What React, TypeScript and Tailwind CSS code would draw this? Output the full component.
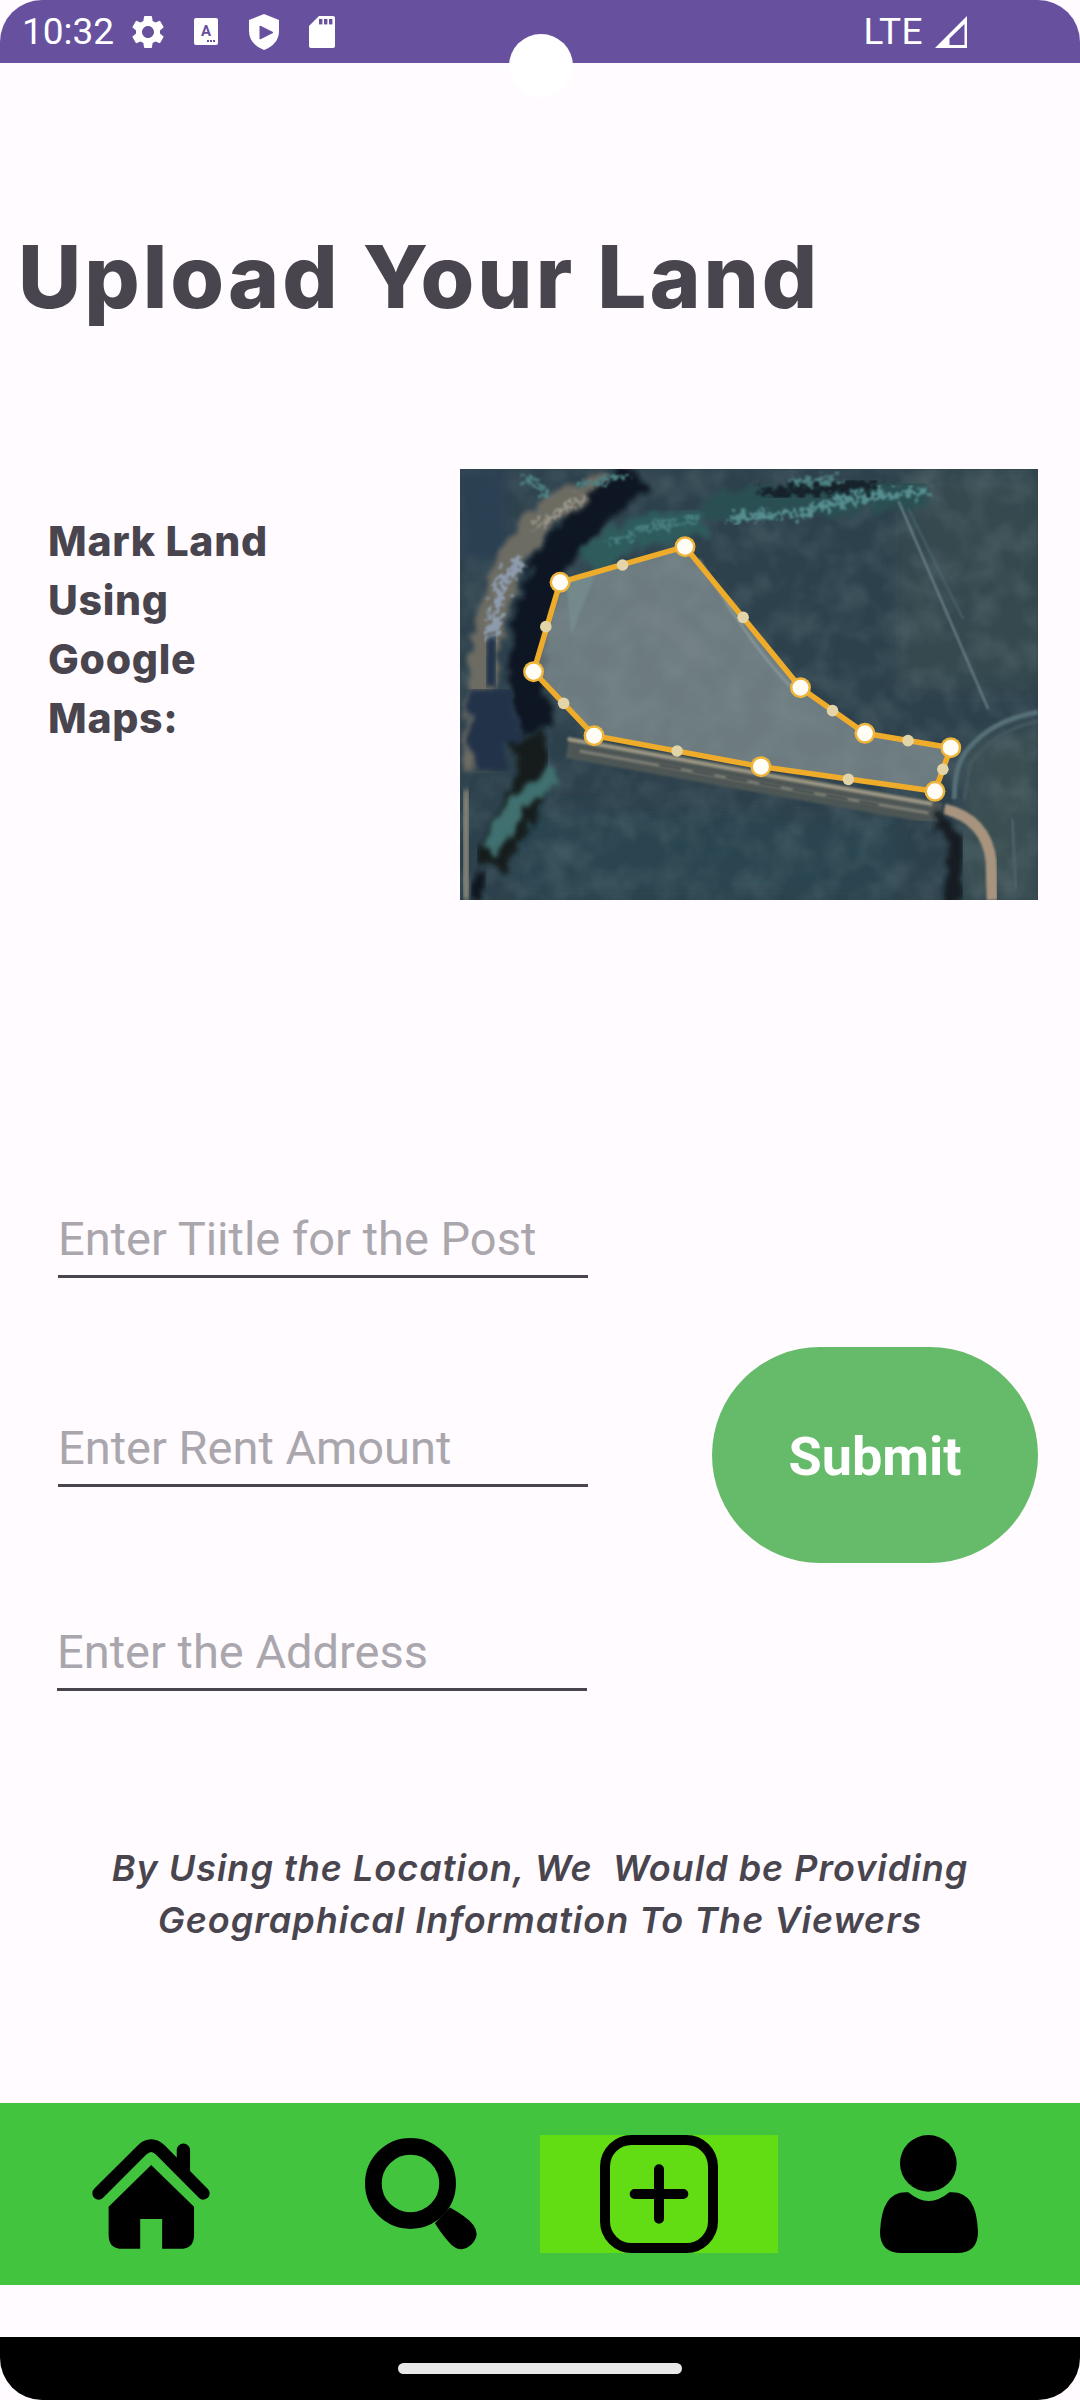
import React from "react";

const toX = (z: number) => (z - 51) / 2.52;
const toY = (z: number) => (z - 57) / 3;

const bigPts: [number, number][] = [
  [620, 290], [304, 397], [237, 665], [390, 857], [812, 950], [1252, 1024], [1292, 893], [1075, 850], [912, 713],
];
const smallPts: [number, number][] = [
  [462, 345], [268, 530], [313, 760], [600, 903], [1033, 988], [1272, 958], [1184, 872], [993, 782], [767, 502],
];
const polyPoints = bigPts.map(([x, y]) => `${toX(x)},${toY(y)}`).join(" ");

function SatelliteMap() {
  return (
    <svg width="578" height="431" viewBox="0 0 580 431" preserveAspectRatio="none" className="block shrink-0">
      <defs>
        <filter id="soft" x="-10%" y="-10%" width="120%" height="120%"><feGaussianBlur stdDeviation="1.3" /></filter>
        <filter id="softer" x="-20%" y="-20%" width="140%" height="140%"><feGaussianBlur stdDeviation="8" /></filter>
        <filter id="rough" x="-20%" y="-20%" width="140%" height="140%">
          <feTurbulence type="fractalNoise" baseFrequency="0.07" numOctaves="4" seed="4" result="n" />
          <feDisplacementMap in="SourceGraphic" in2="n" scale="18" xChannelSelector="R" yChannelSelector="G" />
          <feGaussianBlur stdDeviation="2.4" />
        </filter>
        <filter id="fleck" x="-20%" y="-20%" width="140%" height="140%">
          <feTurbulence type="fractalNoise" baseFrequency="0.16" numOctaves="3" seed="11" result="n" />
          <feDisplacementMap in="SourceGraphic" in2="n" scale="26" xChannelSelector="R" yChannelSelector="G" />
          <feGaussianBlur stdDeviation="1.1" />
        </filter>
        <filter id="mottle" x="0" y="0" width="100%" height="100%">
          <feTurbulence type="fractalNoise" baseFrequency="0.035" numOctaves="4" seed="7" />
          <feColorMatrix values="0 0 0 0 0.62  0 0 0 0 0.74  0 0 0 0 0.76  1.6 0 0 0 -0.62" />
          <feGaussianBlur stdDeviation="1.6" />
        </filter>
        <clipPath id="mapclip"><rect width="580" height="431" /></clipPath>
      </defs>
      <g clipPath="url(#mapclip)">
        <rect width="580" height="431" fill="#2d414c" />
        <rect x="440" y="0" width="140" height="220" fill="#344850" filter="url(#softer)" />
        <path d="M60 340 L440 350 L440 431 L50 431 Z" fill="#2c444f" filter="url(#softer)" />
        <path d="M510 270 L580 260 L580 431 L505 431 Z" fill="#3b4f52" filter="url(#softer)" />
        <rect width="580" height="431" filter="url(#mottle)" opacity="0.16" />
        {/* left bank */}
        <rect x="0" y="0" width="46" height="90" fill="#2a4152" filter="url(#softer)" />
        <path d="M16 300 L26 170 L50 90 L90 40 L150 18" fill="none" stroke="#6d6c64" strokeWidth="28" filter="url(#rough)" />
        <path d="M4 431 L8 320" fill="none" stroke="#8f897c" strokeWidth="14" filter="url(#rough)" />
        <path d="M30 170 L44 110 L62 92" fill="none" stroke="#8d9bad" strokeWidth="10" filter="url(#fleck)" />
        <path d="M74 60 L110 36 L160 18" fill="none" stroke="#9d9a8e" strokeWidth="5" filter="url(#fleck)" />
        {/* dark tree belt */}
        <path d="M175 5 L130 50 L92 90 L72 150 L66 210 L76 260" fill="none" stroke="#0f1820" strokeWidth="34" filter="url(#rough)" />
        <path d="M66 265 L78 300 L60 340 L28 395" fill="none" stroke="#121d1e" strokeWidth="34" filter="url(#rough)" />
        <path d="M8 232 H52 M10 262 H58 M14 290 H46" fill="none" stroke="#20304a" strokeWidth="30" filter="url(#rough)" />
        <path d="M34 170 L28 220" fill="none" stroke="#20304a" strokeWidth="16" filter="url(#rough)" />
        {/* teal vegetation */}
        <path d="M128 92 L175 64 L245 50" fill="none" stroke="#2f5b5d" strokeWidth="30" filter="url(#rough)" />
        <path d="M245 46 L300 34 L380 28 L470 20" fill="none" stroke="#2b4f53" strokeWidth="34" filter="url(#rough)" />
        <path d="M150 74 L190 58 L240 50" fill="none" stroke="#4a8082" strokeWidth="5" filter="url(#fleck)" />
        <path d="M270 50 L340 44 L390 30 L470 22" fill="none" stroke="#578f90" strokeWidth="7" filter="url(#fleck)" />
        <path d="M300 26 L420 14" fill="none" stroke="#14222a" strokeWidth="11" filter="url(#fleck)" />
        <path d="M70 0 H280" fill="none" stroke="#1a2932" strokeWidth="26" filter="url(#rough)" />
        <path d="M280 0 H480" fill="none" stroke="#1d2f37" strokeWidth="14" filter="url(#rough)" />
        <path d="M60 6 L90 26 M120 16 L170 6 M330 12 L380 10" fill="none" stroke="#4e8284" strokeWidth="5" filter="url(#fleck)" />
        <path d="M30 380 L58 335 L95 305" fill="none" stroke="#41706f" strokeWidth="20" filter="url(#rough)" />
        <path d="M14 431 L24 400" fill="none" stroke="#0d161c" strokeWidth="16" filter="url(#rough)" />
        {/* road */}
        <path d="M108 278 L330 318 L482 345" fill="none" stroke="#4d5654" strokeWidth="22" filter="url(#soft)" />
        <path d="M108 270 L330 310 L474 335" fill="none" stroke="#9c9784" strokeWidth="4" filter="url(#soft)" />
        <path d="M120 282 L330 320 L470 344" fill="none" stroke="#7e8074" strokeWidth="3" filter="url(#soft)" />
        <path d="M200 296 L420 336" fill="none" stroke="#3f4a4b" strokeWidth="2.5" strokeDasharray="22 12" filter="url(#soft)" />
        <path d="M486 340 Q528 350 533 392 L534 431" fill="none" stroke="#a8947e" strokeWidth="11" filter="url(#soft)" />
        {/* dark shrubs in corner */}
        <path d="M478 350 L500 372 L494 431" fill="none" stroke="#161f22" strokeWidth="16" filter="url(#rough)" />
        {/* ditch right */}
        <path d="M580 243 Q530 252 506 285 Q496 300 496 330" fill="none" stroke="#566f77" strokeWidth="5" filter="url(#soft)" />
        <path d="M580 252 Q535 262 512 295 L506 330" fill="none" stroke="#45595f" strokeWidth="3" filter="url(#soft)" />
        <path d="M554 350 L558 420" fill="none" stroke="#4f6468" strokeWidth="2.5" filter="url(#soft)" />
        {/* thin line on upper field */}
        <path d="M440 32 L530 240" fill="none" stroke="#7b9298" strokeWidth="1.6" filter="url(#soft)" />
        <path d="M450 40 L505 150" fill="none" stroke="#4f6a72" strokeWidth="1.4" filter="url(#soft)" />
        {/* marked land */}
        <polygon points={polyPoints} fill="#94a0a0" fillOpacity="0.62" />
        <path d="M106 110 L138 100 L112 165 Z" fill="#7fa39f" opacity="0.35" filter="url(#soft)" />
        <path d="M175 140 Q230 160 240 195" fill="none" stroke="#8a9392" strokeWidth="12" opacity="0.35" filter="url(#softer)" />
        <path d="M240 90 Q300 190 340 225" fill="none" stroke="#a0b2b0" strokeWidth="2" opacity="0.6" filter="url(#soft)" />
        <polygon points={polyPoints} fill="none" stroke="#efac2b" strokeWidth="5.5" strokeLinejoin="round" />
        {smallPts.map(([x, y], i) => (
          <circle key={i} cx={toX(x)} cy={toY(y)} r="5.8" fill="#e3d5a8" />
        ))}
        {bigPts.map(([x, y], i) => (
          <g key={i}>
            <circle cx={toX(x)} cy={toY(y)} r="10.5" fill="#efb53b" />
            <circle cx={toX(x)} cy={toY(y)} r="8" fill="#fffdf5" />
          </g>
        ))}
      </g>
    </svg>
  );
}

function Gear() {
  return (
    <svg width="40" height="40" viewBox="0 0 24 24" fill="#ffffff" className="shrink-0">
      <path d="M19.14 12.94c.04-.3.06-.61.06-.94 0-.32-.02-.64-.07-.94l2.03-1.58a.49.49 0 0 0 .12-.61l-1.92-3.32a.488.488 0 0 0-.59-.22l-2.39.96c-.5-.38-1.03-.7-1.62-.94l-.36-2.54a.484.484 0 0 0-.48-.41h-3.84c-.24 0-.43.17-.47.41l-.36 2.54c-.59.24-1.13.57-1.62.94l-2.39-.96c-.22-.08-.47 0-.59.22L2.74 8.87c-.12.21-.08.47.12.61l2.03 1.58c-.05.3-.09.63-.09.94s.02.64.07.94l-2.03 1.58a.49.49 0 0 0-.12.61l1.92 3.32c.12.22.37.29.59.22l2.39-.96c.5.38 1.03.7 1.62.94l.36 2.54c.05.24.24.41.48.41h3.84c.24 0 .44-.17.47-.41l.36-2.54c.59-.24 1.13-.56 1.62-.94l2.39.96c.22.08.47 0 .59-.22l1.92-3.32c.12-.22.07-.47-.12-.61l-2.01-1.58zM12 15.6c-1.98 0-3.6-1.62-3.6-3.6s1.62-3.6 3.6-3.6 3.6 1.62 3.6 3.6-1.62 3.6-3.6 3.6z" />
    </svg>
  );
}

function StatusBar() {
  return (
    <div className="relative flex h-[63px] shrink-0 items-center rounded-t-[42px] bg-[#67519f] pl-[22px] pr-[113px] text-white font-['Roboto',sans-serif] text-[37px] leading-none">
      <span className="w-[91px]">10:32</span>
      <span className="ml-[15px] flex items-center">
        <Gear />
      </span>
      <svg width="24" height="27" viewBox="0 0 24 27" className="ml-[26px] shrink-0">
        <rect width="24" height="27" rx="2" fill="#ffffff" />
        <text x="12" y="18" textAnchor="middle" fontFamily="Roboto, sans-serif" fontWeight="700" fontSize="15" fill="#67519f">A</text>
        <rect x="13" y="22" width="2" height="2" fill="#67519f" />
        <rect x="16" y="22" width="2" height="2" fill="#67519f" />
        <rect x="19" y="22" width="2" height="2" fill="#67519f" />
      </svg>
      <svg width="30" height="36" viewBox="0 0 30 36" className="ml-[31px] shrink-0">
        <path d="M15 0 L30 6 V17 Q30 30 15 36 Q0 30 0 17 V6 Z" fill="#ffffff" />
        <path d="M11 12 L24 18.5 L11 25 Z" fill="#67519f" stroke="#67519f" strokeWidth="1" strokeLinejoin="round" />
      </svg>
      <svg width="26" height="32" viewBox="0 0 26 32" className="ml-[30px] shrink-0">
        <path d="M10 0 H24 Q26 0 26 2 V30 Q26 32 24 32 H2 Q0 32 0 30 V10 Z" fill="#ffffff" />
        <rect x="10" y="3" width="3.4" height="5.4" fill="#67519f" />
        <rect x="15" y="3" width="3.4" height="5.4" fill="#67519f" />
        <rect x="20" y="3" width="3.4" height="5.4" fill="#67519f" />
      </svg>
      <span className="ml-auto tracking-[0.5px]">LTE</span>
      <svg width="32" height="32" viewBox="0 0 32 32" className="ml-[12px] shrink-0">
        <path fillRule="evenodd" d="M0 32 L32 0 V32 Z M14.5 29 H29.5 V8 L14.5 22.5 Z" fill="#ffffff" />
      </svg>
      <div className="absolute left-[509px] top-[34px] h-[64px] w-[64px] rounded-full bg-white" />
    </div>
  );
}

function Field({ placeholder, shift }: { placeholder: string; shift?: boolean }) {
  return (
    <input
      readOnly
      placeholder={placeholder}
      className={`block h-[64px] w-[530px] border-b-[3px] border-[#49454f] bg-transparent pb-[10px] text-[47px] font-['Roboto',sans-serif] outline-none placeholder:text-[#a9a7ad] ${shift ? "-ml-px" : ""}`}
    />
  );
}

export default function App() {
  return (
    <div className="flex h-[2400px] w-[1080px] flex-col overflow-hidden bg-[#fffbfe] text-[#49454f]">
      <StatusBar />
      <div className="h-[406px] shrink-0 pl-[18px] pt-[164px]">
        <h1 className="whitespace-nowrap font-['Inter',sans-serif] text-[87px] font-extrabold leading-[100px] tracking-[3px]">
          Upload Your Land
        </h1>
      </div>
      <div className="flex h-[431px] shrink-0 justify-between pl-[48px] pr-[42px]">
        <p className="mt-[43px] w-[240px] font-['Inter',sans-serif] text-[41px] font-extrabold leading-[59px] tracking-[0.7px]">
          Mark Land Using Google Maps:
        </p>
        <SatelliteMap />
      </div>
      <div className="flex shrink-0 items-start justify-between pl-[58px] pr-[42px] pt-[314px]">
        <div className="flex flex-col">
          <Field placeholder="Enter Tiitle for the Post" />
          <div className="mt-[145px]">
            <Field placeholder="Enter Rent Amount" />
          </div>
          <div className="mt-[140px]">
            <Field placeholder="Enter the Address" shift />
          </div>
        </div>
        <button className="mt-[133px] flex h-[216px] w-[326px] items-center justify-center rounded-full bg-[#66bb6a] pt-[2px] font-['Roboto',sans-serif] text-[54px] font-bold text-white">
          Submit
        </button>
      </div>
      <p className="mt-[151px] shrink-0 whitespace-pre text-center font-['Inter',sans-serif] text-[36px] font-semibold italic leading-[52px] tracking-[1px]">
        {"By Using the Location, We  Would be Providing\nGeographical Information To The Viewers"}
      </p>
      <nav className="mt-[157px] grid h-[182px] shrink-0 grid-cols-[302px_238px_238px_302px] bg-[#43c43f]">
        <div className="flex items-center justify-center">
          <svg width="118" height="110" viewBox="65 42 355 330">
            <path d="M85 205 L215 75 Q243 48 271 75 L400 205" fill="none" stroke="#000" strokeWidth="38" strokeLinecap="round" strokeLinejoin="round" />
            <path d="M340 75 V140" fill="none" stroke="#000" strokeWidth="40" strokeLinecap="round" />
            <path d="M115 245 L243 120 L372 245 V330 Q372 372 330 372 H276 V282 H210 V372 H157 Q115 372 115 330 Z" fill="#000" />
          </svg>
        </div>
        <div className="flex items-center justify-center">
          <svg width="112" height="112" viewBox="886 40 335 335">
            <circle cx="1022" cy="176" r="111" fill="none" stroke="#000" strokeWidth="50" />
            <path d="M1095 295 L1140 248 Q1190 275 1210 300 Q1232 330 1205 358 Q1175 386 1145 360 Q1120 335 1095 295 Z" fill="#000" />
          </svg>
        </div>
        <div className="my-[32px] flex items-center justify-center bg-[#62dd14]">
          <svg width="118" height="118" viewBox="60 30 354 354">
            <rect x="75" y="45" width="324" height="324" rx="80" fill="none" stroke="#000" strokeWidth="30" />
            <path d="M164 207 H310 M237 133 V281" fill="none" stroke="#000" strokeWidth="30" strokeLinecap="round" />
          </svg>
        </div>
        <div className="flex items-center justify-center">
          <svg width="98" height="118" viewBox="900 30 294 354">
            <circle cx="1045" cy="115" r="85" fill="#000" />
            <path d="M985 202 Q1046 254 1108 202 Q1190 195 1194 320 Q1194 384 1130 384 H965 Q900 384 900 320 Q905 195 985 202 Z" fill="#000" />
          </svg>
        </div>
      </nav>
      <div className="h-[52px] shrink-0" />
      <div className="flex h-[63px] shrink-0 items-start justify-center rounded-b-[42px] bg-black pt-[26px]">
        <div className="h-[11px] w-[284px] rounded-full bg-[#e8e8e8]" />
      </div>
    </div>
  );
}
